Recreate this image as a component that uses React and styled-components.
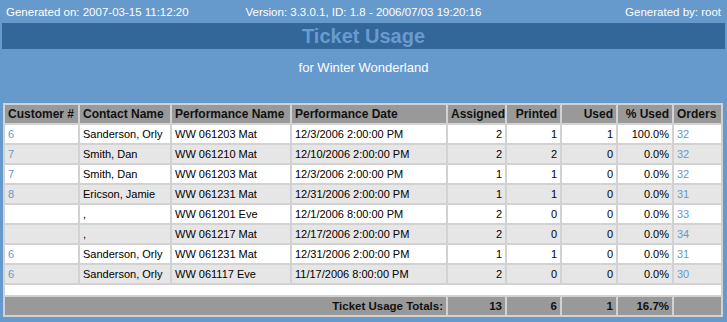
import React from 'react'
import styled, { createGlobalStyle } from 'styled-components'

const GlobalStyle = createGlobalStyle`
  html, body {
    margin: 0;
    padding: 0;
    background: #6699cc;
  }
  body {
    font-family: 'Liberation Sans', Arial, sans-serif;
  }
`

const Page = styled.div`
  width: 727px;
  height: 322px;
  background: #6699cc;
  padding: 0 2px;
  box-sizing: border-box;
  overflow: hidden;
`

const TopBar = styled.div`
  display: grid;
  grid-template-columns: 1fr auto 1fr;
  align-items: center;
  height: 23px;
  padding: 0 4px;
  font-size: 11.5px;
  color: #ffffff;
`

const TopItem = styled.span`
  text-align: ${p => p.$align || 'left'};
`

const TitleBand = styled.div`
  height: 26px;
  background: #336699;
  display: flex;
  align-items: center;
  justify-content: center;
  font-size: 20px;
  font-weight: bold;
  color: #6a9bd0;
`

const Subtitle = styled.div`
  margin-top: 11px;
  height: 16px;
  line-height: 16px;
  text-align: center;
  font-size: 13px;
  color: #ffffff;
`

const Table = styled.table`
  margin: 27px 0 0 1px;
  width: 720px;
  table-layout: fixed;
  border-collapse: separate;
  border-spacing: 2px;
  background: #d2d2d2;
  font-size: 11px;
  color: #000;
`

const Th = styled.th`
  height: 18px;
  padding: 0 3px;
  background: #999999;
  color: #111;
  font-size: 12px;
  font-weight: bold;
  text-align: ${p => p.$align || 'left'};
  white-space: nowrap;
  overflow: hidden;
`

const Row = styled.tr`
  background: ${p => (p.$alt ? '#e6e6e6' : '#ffffff')};
`

const Td = styled.td`
  height: 18px;
  padding: 0 3px;
  text-align: ${p => p.$align || 'left'};
  white-space: nowrap;
  overflow: hidden;
`

const LinkText = styled.span`
  color: #6699cc;
`

const SpacerCell = styled.td`
  height: 10px;
  padding: 0;
  background: #ffffff;
`

const TotalCell = styled.td`
  height: 18px;
  padding: 0 3px;
  background: #999999;
  font-size: 11.5px;
  font-weight: bold;
  color: #111;
  text-align: right;
`

const rows = [
  ['6', 'Sanderson, Orly', 'WW 061203 Mat', '12/3/2006 2:00:00 PM', 2, 1, 1, '100.0%', '32'],
  ['7', 'Smith, Dan', 'WW 061210 Mat', '12/10/2006 2:00:00 PM', 2, 2, 0, '0.0%', '32'],
  ['7', 'Smith, Dan', 'WW 061203 Mat', '12/3/2006 2:00:00 PM', 1, 1, 0, '0.0%', '32'],
  ['8', 'Ericson, Jamie', 'WW 061231 Mat', '12/31/2006 2:00:00 PM', 1, 1, 0, '0.0%', '31'],
  ['', ',', 'WW 061201 Eve', '12/1/2006 8:00:00 PM', 2, 0, 0, '0.0%', '33'],
  ['', ',', 'WW 061217 Mat', '12/17/2006 2:00:00 PM', 2, 0, 0, '0.0%', '34'],
  ['6', 'Sanderson, Orly', 'WW 061231 Mat', '12/31/2006 2:00:00 PM', 1, 1, 0, '0.0%', '31'],
  ['6', 'Sanderson, Orly', 'WW 061117 Eve', '11/17/2006 8:00:00 PM', 2, 0, 0, '0.0%', '30'],
]

const widths = [73, 90, 118, 154, 57, 53, 54, 54, 47]

const App = () => {
  return (
    <>
      <GlobalStyle />
      <Page>
        <TopBar>
          <TopItem>Generated on: 2007-03-15 11:12:20</TopItem>
          <TopItem $align="center">Version: 3.3.0.1, ID: 1.8 - 2006/07/03 19:20:16</TopItem>
          <TopItem $align="right">Generated by: root</TopItem>
        </TopBar>
        <TitleBand>Ticket Usage</TitleBand>
        <Subtitle>for Winter Wonderland</Subtitle>
        <Table>
          <colgroup>
            {widths.map((w, i) => (
              <col key={i} style={{ width: w }} />
            ))}
          </colgroup>
          <thead>
            <tr>
              <Th>Customer #</Th>
              <Th>Contact Name</Th>
              <Th>Performance Name</Th>
              <Th>Performance Date</Th>
              <Th $align="right">Assigned</Th>
              <Th $align="right">Printed</Th>
              <Th $align="right">Used</Th>
              <Th $align="right">% Used</Th>
              <Th>Orders</Th>
            </tr>
          </thead>
          <tbody>
            {rows.map((r, i) => (
              <Row key={i} $alt={i % 2 === 1}>
                <Td><LinkText>{r[0]}</LinkText></Td>
                <Td>{r[1]}</Td>
                <Td>{r[2]}</Td>
                <Td>{r[3]}</Td>
                <Td $align="right">{r[4]}</Td>
                <Td $align="right">{r[5]}</Td>
                <Td $align="right">{r[6]}</Td>
                <Td $align="right">{r[7]}</Td>
                <Td><LinkText>{r[8]}</LinkText></Td>
              </Row>
            ))}
            <tr>
              <SpacerCell colSpan={9} />
            </tr>
            <tr>
              <TotalCell colSpan={4}>Ticket Usage Totals:</TotalCell>
              <TotalCell>13</TotalCell>
              <TotalCell>6</TotalCell>
              <TotalCell>1</TotalCell>
              <TotalCell>16.7%</TotalCell>
              <TotalCell />
            </tr>
          </tbody>
        </Table>
      </Page>
    </>
  )
}

export default App
